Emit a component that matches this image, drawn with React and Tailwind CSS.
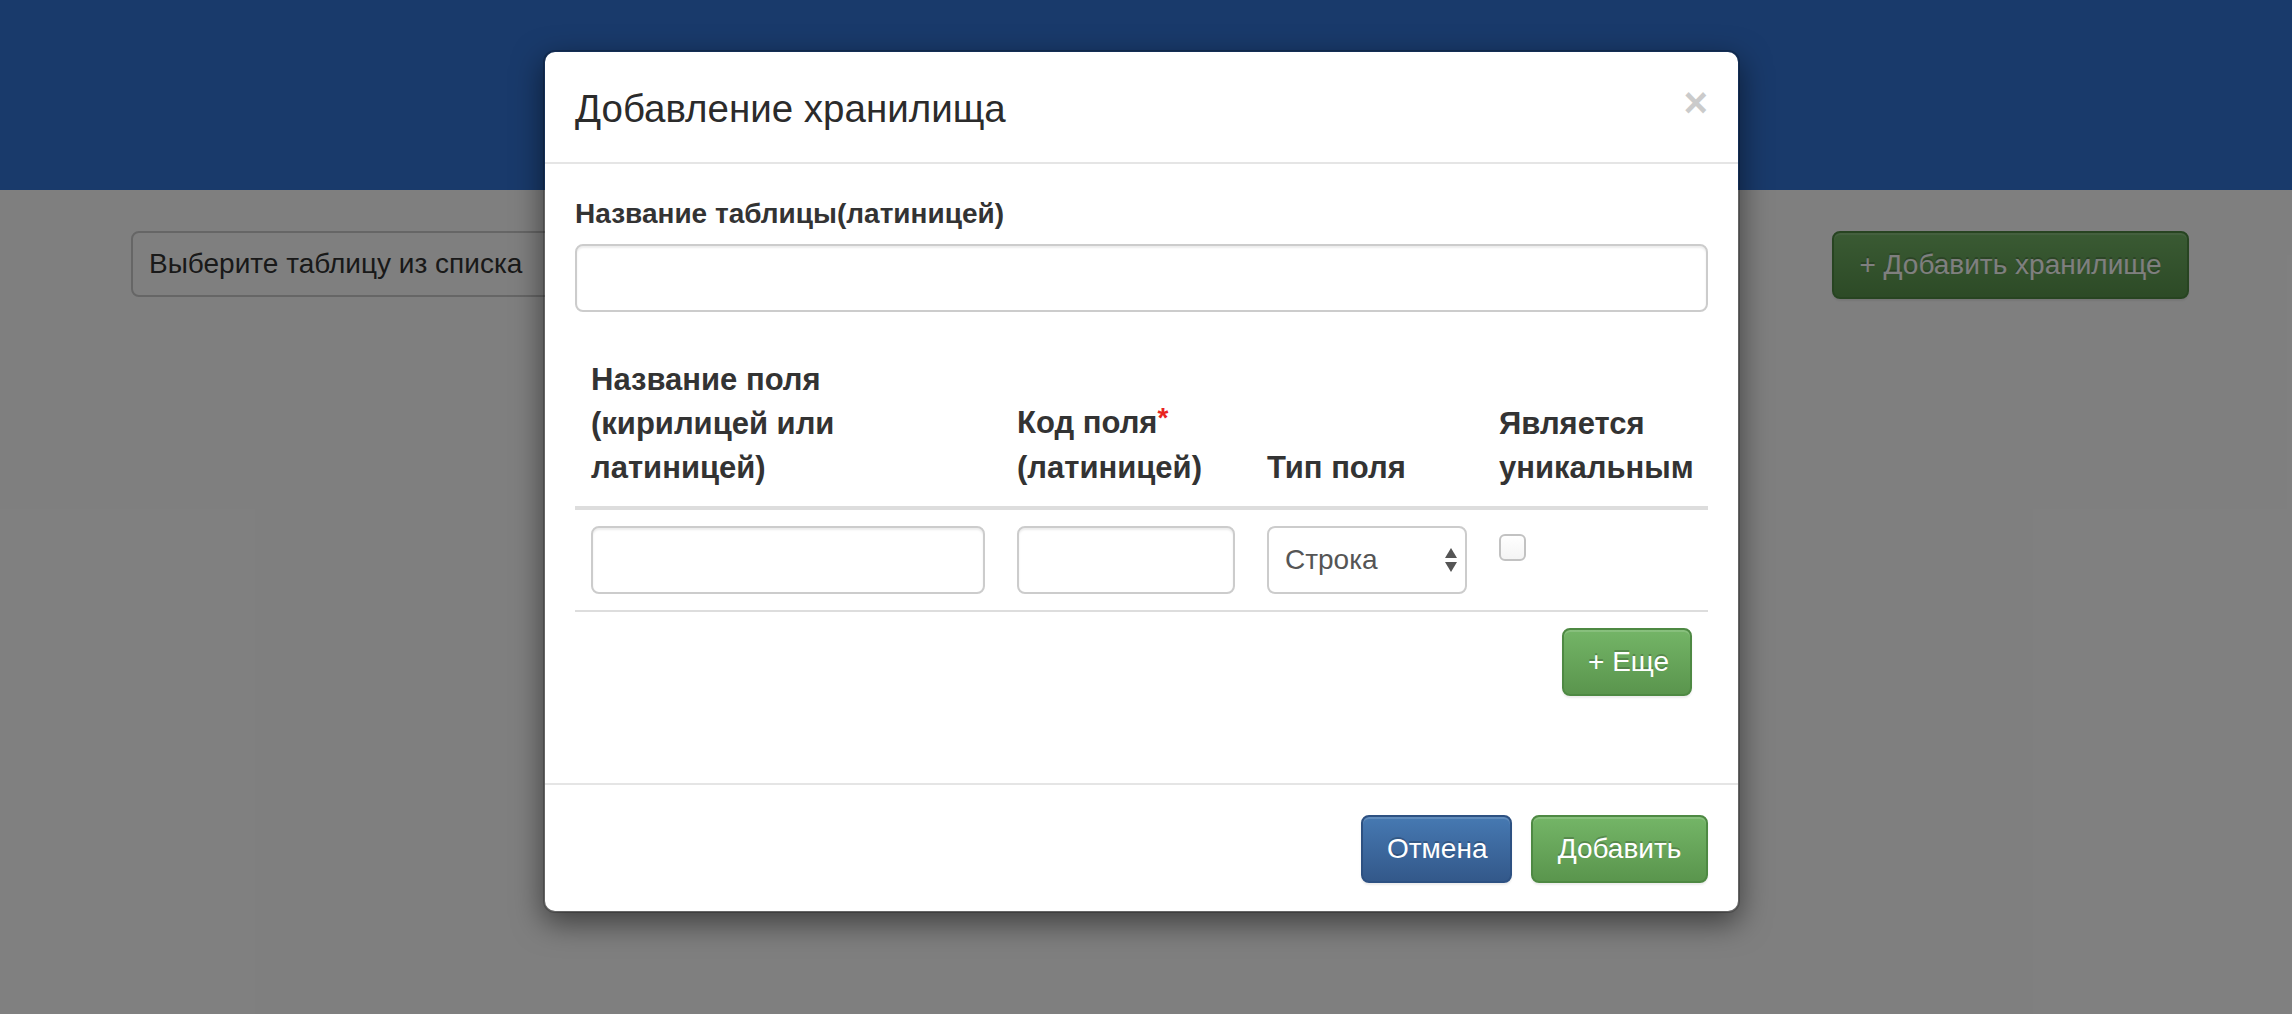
const font = "font-['Liberation_Sans',Arial,sans-serif]";

const btn =
  "h-[68px] px-[24px] whitespace-nowrap rounded-[8px] border-2 text-[28px] leading-[40px] text-white bg-gradient-to-b [text-shadow:0_-2px_0_rgba(0,0,0,0.2)] shadow-[inset_0_2px_0_rgba(255,255,255,0.15),0_2px_2px_rgba(0,0,0,0.075)]";
const green = "from-[#74b567] to-[#5a954d] border-[#4e8943]";
const blue = "from-[#4679b2] to-[#33588a] border-[#2d5182]";

const input =
  "block w-full h-[68px] rounded-[8px] border-2 border-[#cccccc] bg-white shadow-[inset_0_2px_2px_rgba(0,0,0,0.075)] outline-none";

function SelectArrows() {
  return (
    <svg width="12" height="24" viewBox="0 0 12 24" className="absolute right-[10px] top-[22px]">
      <path d="M6 0 L12 10 L0 10 Z" fill="#555" />
      <path d="M0 14 L12 14 L6 24 Z" fill="#555" />
    </svg>
  );
}

export default function App() {
  return (
    <div className={`relative w-full h-[1014px] overflow-hidden bg-white ${font}`}>
      {/* page under the backdrop */}
      <header className="h-[190px] bg-[#3374d6]" />
      <div className="flex items-start justify-between pl-[131px] pr-[103px] pt-[41px]">
        <div className="w-[760px] h-[66px] rounded-[8px] border-2 border-[#cccccc] bg-white flex items-center pl-[16px] text-[28px] text-[#333]">
          Выберите таблицу из списка
        </div>
        <button className={`${btn} ${green} h-[66px] w-[357px] px-0`}>+ Добавить хранилище</button>
      </div>

      {/* backdrop */}
      <div className="absolute inset-0 bg-black/50" />

      {/* modal */}
      <div className="absolute inset-0 pl-[543px] pt-[50px]">
        <div className="w-[1197px] bg-white bg-clip-padding border-2 border-black/20 rounded-[12px] shadow-[0_10px_30px_rgba(0,0,0,0.5)] text-[#333]">
          <div className="flex justify-between items-start px-[30px] pt-[31px] pb-[28px] border-b-2 border-[#e5e5e5]">
            <h4 className="text-[38.5px] leading-[51px] font-normal text-[#2b2b2b]">Добавление хранилища</h4>
            <span className="text-[42px] leading-none font-bold text-black opacity-20 -mt-[1px]">×</span>
          </div>

          <div className="p-[30px]">
            <label className="block text-[28px] leading-[40px] font-bold mb-[10px]">
              Название таблицы(латиницей)
            </label>
            <input className={input} />

            <table className="w-full table-fixed border-collapse mt-[30px] mb-[41px]">
              <colgroup>
                <col className="w-[426px]" />
                <col className="w-[250px]" />
                <col className="w-[232px]" />
                <col />
              </colgroup>
              <thead>
                <tr className="border-b-4 border-[#dddddd] text-left align-bottom text-[31px] leading-[44px] font-bold">
                  <th className="p-[16px] pr-[8px]">
                    Название поля
                    <br />
                    (кирилицей или
                    <br />
                    латиницей)
                  </th>
                  <th className="p-[16px] pr-[8px]">
                    Код поля<span className="text-[#e8231f] text-[28px] relative -top-[6px]">*</span>
                    <br />
                    (латиницей)
                  </th>
                  <th className="p-[16px] pr-[8px]">Тип поля</th>
                  <th className="p-[16px] pr-0 whitespace-nowrap">
                    Является
                    <br />
                    уникальным
                  </th>
                </tr>
              </thead>
              <tbody>
                <tr className="align-top">
                  <td className="p-[16px]">
                    <input className={input} />
                  </td>
                  <td className="p-[16px]">
                    <input className={input} />
                  </td>
                  <td className="p-[16px]">
                    <div className="relative">
                      <div className="h-[68px] rounded-[8px] border-2 border-[#cccccc] bg-white flex items-center pl-[16px] text-[28px] text-[#555]">
                        Строка
                      </div>
                      <SelectArrows />
                    </div>
                  </td>
                  <td className="p-[16px]">
                    <input
                      type="checkbox"
                      className="appearance-none block mt-[8px] w-[27px] h-[27px] rounded-[6px] border-2 border-[#c2c2c2] bg-gradient-to-b from-white to-[#f4f4f4]"
                    />
                  </td>
                </tr>
                <tr className="border-t-2 border-[#dddddd]">
                  <td colSpan={4} className="p-[16px] text-right">
                    <button className={`${btn} ${green} w-[130px] px-0`}>+ Еще</button>
                  </td>
                </tr>
              </tbody>
            </table>
          </div>

          <div className="flex justify-end gap-[19px] px-[30px] pt-[30px] pb-[28px] border-t-2 border-[#e5e5e5]">
            <button className={`${btn} ${blue} w-[151px] px-0`}>Отмена</button>
            <button className={`${btn} ${green} w-[177px] px-0`}>Добавить</button>
          </div>
        </div>
      </div>
    </div>
  );
}
